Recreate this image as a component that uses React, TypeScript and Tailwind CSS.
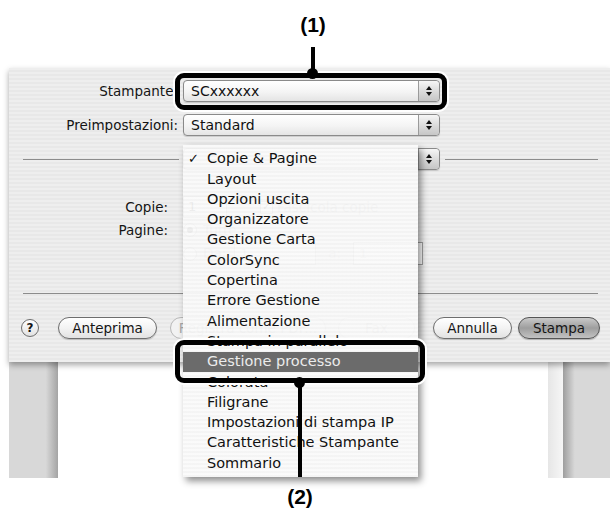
import React from 'react';

const MENU = [
  'Copie & Pagine',
  'Layout',
  'Opzioni uscita',
  'Organizzatore',
  'Gestione Carta',
  'ColorSync',
  'Copertina',
  'Errore Gestione',
  'Alimentazione',
  'Stampa in parallelo',
  'Gestione processo',
  'Colorata',
  'Filigrane',
  'Impostazioni di stampa IP',
  'Caratteristiche Stampante',
  'Sommario',
];

function Arrows() {
  return (
    <div className="w-[21px] h-full border-l border-[#9a9a9a] rounded-r-[4px] bg-[linear-gradient(180deg,#f6f6f6,#dcdcdc_50%,#c6c6c6)] flex flex-col items-center justify-center gap-[2px]">
      <svg width="6" height="4" viewBox="0 0 6 4">
        <path d="M3 0L6 4H0z" fill="#111" />
      </svg>
      <svg width="6" height="4" viewBox="0 0 6 4">
        <path d="M0 0H6L3 4z" fill="#111" />
      </svg>
    </div>
  );
}

function Popup({ value }: { value: string }) {
  return (
    <div className="w-[257px] h-[22px] flex rounded-[4px] border border-[#8a8a8a] bg-[linear-gradient(180deg,#ffffff,#f4f4f4_55%,#e4e4e4)] shadow-[0_1px_1px_rgba(0,0,0,0.15)]">
      <span className="flex-1 pl-[7px] text-[14px] leading-[20px] text-[#111]">{value}</span>
      <Arrows />
    </div>
  );
}

function Pill({ label, className = '', dim = false }: { label: string; className?: string; dim?: boolean }) {
  return (
    <div
      className={`h-[22px] rounded-full border flex items-center justify-center text-[13.5px] ${
        dim ? 'border-[#b8b8b8] text-[#a8a8a8] bg-[#f2f2f2]' : 'border-[#6e6e6e] text-[#151515] bg-[linear-gradient(180deg,#ffffff,#f3f3f3_50%,#e2e2e2)] shadow-[0_1px_1px_rgba(0,0,0,0.2)]'
      } ${className}`}
    >
      {label}
    </div>
  );
}

function Radio({ on = false }: { on?: boolean }) {
  return (
    <div className="w-[14px] h-[14px] rounded-full border border-[#9a9a9a] bg-white flex items-center justify-center">
      {on && <div className="w-[6px] h-[6px] rounded-full bg-[#444]" />}
    </div>
  );
}

function Callout({ box, dot, line }: { box: string; dot: string; line: string }) {
  return (
    <>
      <div className={`absolute border-[5px] border-black rounded-[9px] shadow-[0_0_0_2px_#fff] ${box}`} />
      <div className={`absolute w-[4px] bg-black ${line}`} />
      <div className={`absolute w-[11px] h-[11px] rounded-full bg-black ${dot}`} />
    </>
  );
}

export default function App() {
  return (
    <div className="relative w-[610px] h-[515px] overflow-hidden bg-white font-['DejaVu_Sans','Liberation_Sans',sans-serif] text-[#151515]">
      {/* label (1) */}
      <div className="h-[68px] pl-[16px] flex justify-center pt-[12px]">
        <span className="font-['Liberation_Sans',Arial,sans-serif] font-bold text-[21px] leading-[26px] text-black">(1)</span>
      </div>

      {/* print dialog */}
      <div className="relative z-10 ml-[9px] h-[294px] flex flex-col bg-[image:repeating-linear-gradient(180deg,#eeeeee_0px,#eeeeee_2px,#e8e8e8_2px,#e8e8e8_4px)] shadow-[0_3px_6px_rgba(0,0,0,0.35)]">
        <div className="mt-[12px] flex items-center">
          <span className="w-[169px] text-right text-[13.5px]">Stampante:</span>
          <div className="ml-[5px]">
            <Popup value="SCxxxxxx" />
          </div>
        </div>
        <div className="mt-[12px] flex items-center">
          <span className="w-[169px] text-right text-[13.5px]">Preimpostazioni:</span>
          <div className="ml-[5px]">
            <Popup value="Standard" />
          </div>
        </div>
        <div className="mt-[12px] h-[22px] flex items-center">
          <div className="ml-[14px] w-[156px] h-px bg-[#8c8c8c]" />
          <div className="ml-[4px]">
            <Popup value="" />
          </div>
          <div className="ml-[5px] w-[153px] h-px bg-[#8c8c8c]" />
        </div>

        <div className="mt-[26px] h-[22px] flex items-center">
          <span className="w-[159px] text-right text-[13.5px]">Copie:</span>
          <div className="ml-[15px] w-[44px] h-[22px] border border-[#9a9a9a] bg-white pl-[4px] text-[13px] leading-[20px]">1</div>
          <div className="ml-[33px] w-[13px] h-[13px] border border-[#8a8a8a] bg-white flex items-center justify-center text-[10px] leading-none">✓</div>
          <span className="ml-[4px] text-[13.5px] text-[#9a9a9a]">Fascicola copie</span>
        </div>
        <div className="mt-[1px] h-[22px] flex items-center">
          <span className="w-[159px] text-right text-[13.5px]">Pagine:</span>
          <div className="ml-[15px]">
            <Radio on />
          </div>
          <span className="ml-[6px] text-[13.5px] text-[#9a9a9a]">Tutte</span>
        </div>
        <div className="mt-[1px] h-[23px] flex items-center">
          <div className="ml-[174px]">
            <Radio />
          </div>
          <span className="ml-[6px] text-[13.5px] text-[#9a9a9a]">Da:</span>
          <div className="ml-[8px] w-[82px] h-[23px] border border-[#b0b0b0] bg-white pl-[5px] text-[13px] leading-[21px] text-[#aaa]">1</div>
          <span className="ml-[12px] text-[13.5px] text-[#b5b5b5]">a:</span>
          <div className="ml-[12px] w-[70px] h-[23px] border border-[#a0a0a0] bg-white pl-[5px] text-[13px] leading-[21px] text-[#c0c0c0]">1</div>
        </div>

        <div className="mt-[28px] ml-[14px] mr-[12px] h-px bg-[#8c8c8c]" />

        <div className="mt-[23px] flex items-center">
          <div className="ml-[12px] w-[18px] h-[18px] rounded-full border border-[#6e6e6e] bg-[linear-gradient(180deg,#ffffff,#e2e2e2)] flex items-center justify-center text-[12px] font-bold leading-none">?</div>
          <Pill label="Anteprima" className="ml-[19px] w-[99px]" />
          <Pill label="Registra come PDF..." className="ml-[13px] w-[156px]" dim />
          <Pill label="Fax" className="ml-[12px] w-[77px]" dim />
          <Pill label="Annulla" className="ml-[18px] w-[79px]" />
          <div className="ml-[6px] w-[82px] h-[22px] rounded-full border border-[#555] flex items-center justify-center text-[13.5px] bg-[linear-gradient(180deg,#c9c9c9,#9e9e9e_50%,#c2c2c2)] shadow-[0_1px_1px_rgba(0,0,0,0.25)]">
            Stampa
          </div>
        </div>
      </div>

      {/* preview strip under the dialog */}
      <div className="ml-[9px] h-[116px] flex">
        <div className="w-[49px] bg-[linear-gradient(90deg,#d8d8d8_75%,#a4a4a4)]" />
        <div className="w-[490px] bg-white" />
        <div className="w-[15px] bg-[linear-gradient(90deg,#e6e6e6,#f6f6f6)]" />
        <div className="flex-1 bg-[linear-gradient(90deg,#9e9e9e,#d8d8d8_25%)]" />
      </div>

      {/* label (2) */}
      <div className="h-[37px] flex justify-center pr-[10px] pt-[6px]">
        <span className="font-['Liberation_Sans',Arial,sans-serif] font-bold text-[21px] leading-[26px] text-black">(2)</span>
      </div>

      {/* open popup menu */}
      <div className="absolute z-20 left-[183px] top-[145px] w-[235px] h-[332px] pt-[4px] bg-[image:repeating-linear-gradient(180deg,rgba(250,250,250,0.94)_0px,rgba(250,250,250,0.94)_2px,rgba(244,244,244,0.94)_2px,rgba(244,244,244,0.94)_4px)] shadow-[3px_4px_7px_rgba(0,0,0,0.45)]">
        {MENU.map((m, i) => (
          <div
            key={m}
            className={`h-[20.3px] flex items-center text-[14.5px] ${i === 10 ? 'bg-[#6b6b6b] text-[#ececec]' : 'text-[#111]'}`}
          >
            <span className="w-[24px] pl-[5px] text-[13px]">{i === 0 ? '✓' : ''}</span>
            {m}
          </div>
        ))}
      </div>

      {/* callouts */}
      <div className="absolute z-30 inset-0 pointer-events-none">
        <Callout box="left-[175px] top-[73px] w-[272px] h-[37px]" line="left-[311px] top-[47px] h-[28px]" dot="left-[307px] top-[68px]" />
        <Callout box="left-[175px] top-[340px] w-[250px] h-[43px]" line="left-[298px] top-[383px] h-[94px]" dot="left-[294px] top-[377px]" />
      </div>
    </div>
  );
}
